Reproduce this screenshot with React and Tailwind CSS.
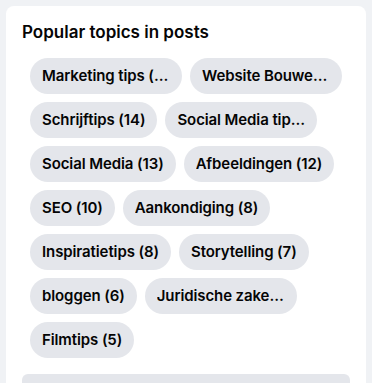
import React from "react";

const topics = [
  "Marketing tips (22)",
  "Website Bouwen (20)",
  "Schrijftips (14)",
  "Social Media tips (13)",
  "Social Media (13)",
  "Afbeeldingen (12)",
  "SEO (10)",
  "Aankondiging (8)",
  "Inspiratietips (8)",
  "Storytelling (7)",
  "bloggen (6)",
  "Juridische zaken (5)",
  "Filmtips (5)",
];

export default function App() {
  return (
    <div
      className="w-[372px] h-[383px] overflow-hidden bg-[#f0f2f5] pt-[6px] pl-[6px] pr-[6px]"
      style={{ fontFamily: "Inter, 'Noto Sans', sans-serif" }}
    >
      <div className="bg-white rounded-[8px] px-4 pt-4 pb-4 h-[400px]">
        <h2 className="text-[17px] leading-[20px] font-semibold text-[#050505]">
          Popular topics in posts
        </h2>
        <div className="mt-4 pl-2 pr-[7px] flex flex-wrap gap-x-2 gap-y-2">
          {topics.map((t) => (
            <div
              key={t}
              className="h-9 max-w-[152px] px-3 rounded-full bg-[#e4e6eb] flex items-center"
            >
              <span className="text-[15px] font-semibold text-[#050505] whitespace-nowrap overflow-hidden text-ellipsis tracking-[-0.1px]">
                {t}
              </span>
            </div>
          ))}
        </div>
        <div className="mt-4 h-9 rounded-[6px] bg-[#e4e6eb]" />
      </div>
    </div>
  );
}
